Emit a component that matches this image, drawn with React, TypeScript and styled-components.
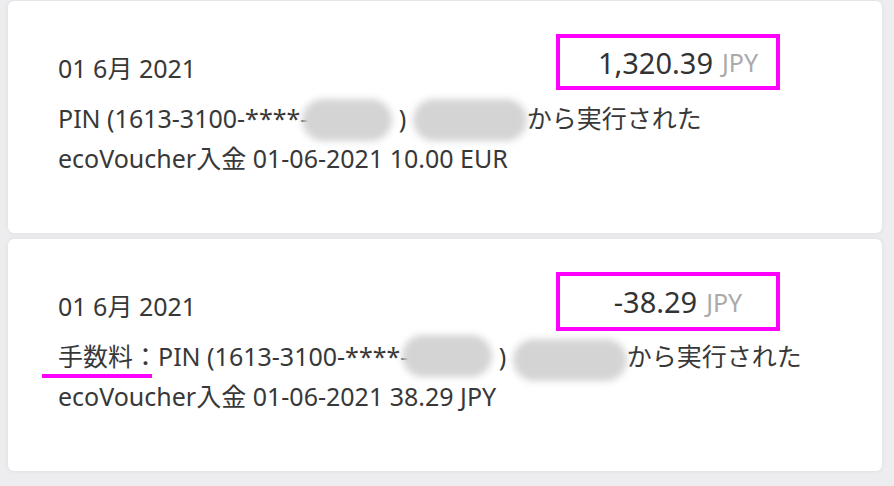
import React from "react";
import styled, { createGlobalStyle } from "styled-components";

const Global = createGlobalStyle`
  html, body { margin: 0; padding: 0; }
  body {
    background: #ededef;
    font-family: "Noto Sans", "Noto Sans CJK JP", sans-serif;
    color: #383838;
    width: 894px;
    height: 486px;
    overflow: hidden;
  }
`;

const Page = styled.div`
  display: flex;
  flex-direction: column;
  gap: 6px;
  padding: 1px 12px 0 8px;
`;

const Card = styled.div`
  position: relative;
  background: #fff;
  border-radius: 6px;
  height: 232px;
  box-sizing: border-box;
  padding: 33px 0 0 50px;
  box-shadow: 0 0 5px rgba(0, 0, 0, 0.07);
`;

const Header = styled.div`
  display: flex;
  justify-content: space-between;
  align-items: flex-end;
  height: 55px;
`;

const DateText = styled.div`
  font-size: 25px;
  line-height: 25px;
  padding-bottom: 8px;
`;

const AmountBox = styled.div<{ $h: number }>`
  box-sizing: border-box;
  width: 224px;
  height: ${(p) => p.$h}px;
  margin-right: 102px;
  border: 4px solid #ff00ff;
  display: flex;
  align-items: center;
  justify-content: center;
  padding-left: 20px;
  gap: 9px;
  align-self: flex-start;
`;

const Amount = styled.span`
  font-size: 29px;
  color: #333;
`;

const Currency = styled.span`
  font-size: 25px;
  color: #aaa;
`;

const Desc = styled.div`
  margin-top: 9px;
  font-size: 25px;
  line-height: 40px;
`;

const Line = styled.div`
  display: flex;
  align-items: center;
  white-space: nowrap;
  height: 40px;
`;

const Blur = styled.span<{ $w: number; $ml?: number; $dy?: number }>`
  display: inline-block;
  width: ${(p) => p.$w}px;
  height: 42px;
  margin-left: ${(p) => p.$ml ?? 0}px;
  transform: translateY(${(p) => p.$dy ?? 0}px);
  border-radius: 21px;
  background: #d4d4d4;
  filter: blur(3.5px);
`;

const Fee = styled.span`
  position: relative;
  &::after {
    content: "";
    position: absolute;
    left: -16px;
    right: 6px;
    bottom: -2px;
    height: 4px;
    background: #ff00ff;
  }
`;

export default function App() {
  return (
    <>
      <Global />
      <Page>
        <Card>
          <Header>
            <DateText>01 6月 2021</DateText>
            <AmountBox $h={56}>
              <Amount>1,320.39</Amount>
              <Currency>JPY</Currency>
            </AmountBox>
          </Header>
          <Desc>
            <Line>
              PIN (1613-3100-****-
              <Blur $w={90} $ml={-6} $dy={2} />
              <span>&nbsp;)&nbsp;</span>
              <Blur $w={114} $dy={2} />
              から実行された
            </Line>
            <Line>ecoVoucher入金 01-06-2021 10.00 EUR</Line>
          </Desc>
        </Card>
        <Card>
          <Header>
            <DateText>01 6月 2021</DateText>
            <AmountBox $h={59}>
              <Amount>-38.29</Amount>
              <Currency>JPY</Currency>
            </AmountBox>
          </Header>
          <Desc>
            <Line>
              <Fee>手数料：</Fee>PIN (1613-3100-****-
              <Blur $w={90} $ml={-6} $dy={0} />
              <span>&nbsp;)&nbsp;</span>
              <Blur $w={114} $dy={4} />
              から実行された
            </Line>
            <Line>ecoVoucher入金 01-06-2021 38.29 JPY</Line>
          </Desc>
        </Card>
      </Page>
    </>
  );
}
